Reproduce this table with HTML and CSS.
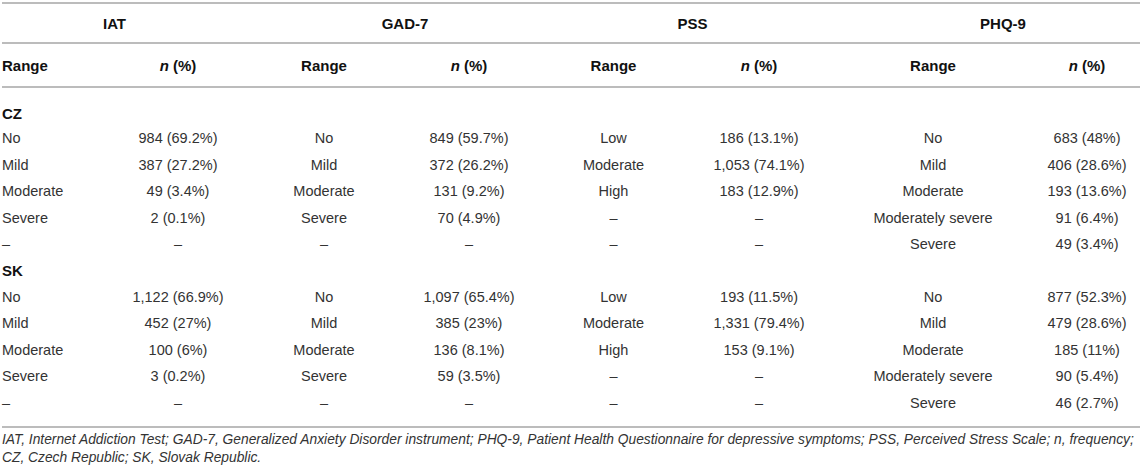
FILE: index.html
```html
<!DOCTYPE html>
<html lang="en">
<head>
    <meta charset="UTF-8">
    <title>Table 2</title>
    <link rel="stylesheet" href="styles.css">
</head>
<body>
    <table class="results">
        <colgroup>
            <col class="c-range1">
            <col class="c-n1">
            <col class="c-range2">
            <col class="c-n2">
            <col class="c-range3">
            <col class="c-n3">
            <col class="c-range4">
            <col class="c-n4">
        </colgroup>
        <thead>
            <tr class="scales">
                <th colspan="2" class="iat">IAT</th>
                <th colspan="2" class="gad">GAD-7</th>
                <th colspan="2" class="pss">PSS</th>
                <th colspan="2" class="phq">PHQ-9</th>
            </tr>
            <tr class="labels">
                <th class="first">Range</th><th><em>n</em> (%)</th>
                <th>Range</th><th><em>n</em> (%)</th>
                <th>Range</th><th><em>n</em> (%)</th>
                <th>Range</th><th><em>n</em> (%)</th>
            </tr>
        </thead>
        <tbody>
            <tr class="group top"><td colspan="8">CZ</td></tr>
            <tr><td>No</td><td>984 (69.2%)</td><td>No</td><td>849 (59.7%)</td><td>Low</td><td>186 (13.1%)</td><td>No</td><td>683 (48%)</td></tr>
            <tr><td>Mild</td><td>387 (27.2%)</td><td>Mild</td><td>372 (26.2%)</td><td>Moderate</td><td>1,053 (74.1%)</td><td>Mild</td><td>406 (28.6%)</td></tr>
            <tr><td>Moderate</td><td>49 (3.4%)</td><td>Moderate</td><td>131 (9.2%)</td><td>High</td><td>183 (12.9%)</td><td>Moderate</td><td>193 (13.6%)</td></tr>
            <tr><td>Severe</td><td>2 (0.1%)</td><td>Severe</td><td>70 (4.9%)</td><td>–</td><td>–</td><td>Moderately severe</td><td>91 (6.4%)</td></tr>
            <tr><td>–</td><td>–</td><td>–</td><td>–</td><td>–</td><td>–</td><td>Severe</td><td>49 (3.4%)</td></tr>
            <tr class="group"><td colspan="8">SK</td></tr>
            <tr><td>No</td><td>1,122 (66.9%)</td><td>No</td><td>1,097 (65.4%)</td><td>Low</td><td>193 (11.5%)</td><td>No</td><td>877 (52.3%)</td></tr>
            <tr><td>Mild</td><td>452 (27%)</td><td>Mild</td><td>385 (23%)</td><td>Moderate</td><td>1,331 (79.4%)</td><td>Mild</td><td>479 (28.6%)</td></tr>
            <tr><td>Moderate</td><td>100 (6%)</td><td>Moderate</td><td>136 (8.1%)</td><td>High</td><td>153 (9.1%)</td><td>Moderate</td><td>185 (11%)</td></tr>
            <tr><td>Severe</td><td>3 (0.2%)</td><td>Severe</td><td>59 (3.5%)</td><td>–</td><td>–</td><td>Moderately severe</td><td>90 (5.4%)</td></tr>
            <tr class="last"><td>–</td><td>–</td><td>–</td><td>–</td><td>–</td><td>–</td><td>Severe</td><td>46 (2.7%)</td></tr>
        </tbody>
    </table>
    <p class="note">IAT, Internet Addiction Test; GAD-7, Generalized Anxiety Disorder instrument; PHQ-9, Patient Health Questionnaire for depressive symptoms; PSS, Perceived Stress Scale; n, frequency; CZ, Czech Republic; SK, Slovak Republic.</p>
</body>
</html>
```

FILE: styles.css
```css
body {
    margin: 0;
    padding: 2px 3px 0 2px;
    background: #fff;
    font-family: "Liberation Sans", Arial, sans-serif;
    color: #333;
}
.results {
    width: 1138px;
    border-collapse: collapse;
    table-layout: fixed;
    font-size: 14.5px;
}
.c-range1 { width: 103px; }
.c-n1 { width: 146px; }
.c-range2 { width: 146px; }
.c-n2 { width: 144px; }
.c-range3 { width: 145px; }
.c-n3 { width: 146px; }
.c-range4 { width: 202px; }
.c-n4 { width: 106px; }
th, td {
    padding: 0;
    text-align: center;
    white-space: nowrap;
}
th {
    color: #111;
    font-weight: bold;
    font-size: 15px;
}
th em {
    font-style: italic;
}
thead tr.scales th {
    height: 38px;
    border-top: 2px solid #bcbcbc;
    border-bottom: 2px solid #bcbcbc;
}
/* nudge the group titles to where the original sits them */
th.iat { padding-right: 24px; }
th.gad { padding-left: 18px; }
th.pss { padding-left: 12px; }
th.phq { padding-left: 34px; }
thead tr.labels th {
    height: 42px;
    border-bottom: 2px solid #bcbcbc;
}
th.first, td:first-child {
    text-align: left;
}
td {
    height: 26.45px;
}
tr.group td {
    color: #111;
    font-weight: bold;
    font-size: 15px;
}
tr.group.top td {
    height: 34px;
    vertical-align: bottom;
    padding-bottom: 3px;
}
tr.last td {
    height: 31px;
    vertical-align: top;
    padding-top: 6px;
    border-bottom: 2px solid #bcbcbc;
}
.note {
    margin: 3px 0 0;
    font-size: 13.8px;
    font-style: italic;
    line-height: 18px;
    color: #333;
}
```
